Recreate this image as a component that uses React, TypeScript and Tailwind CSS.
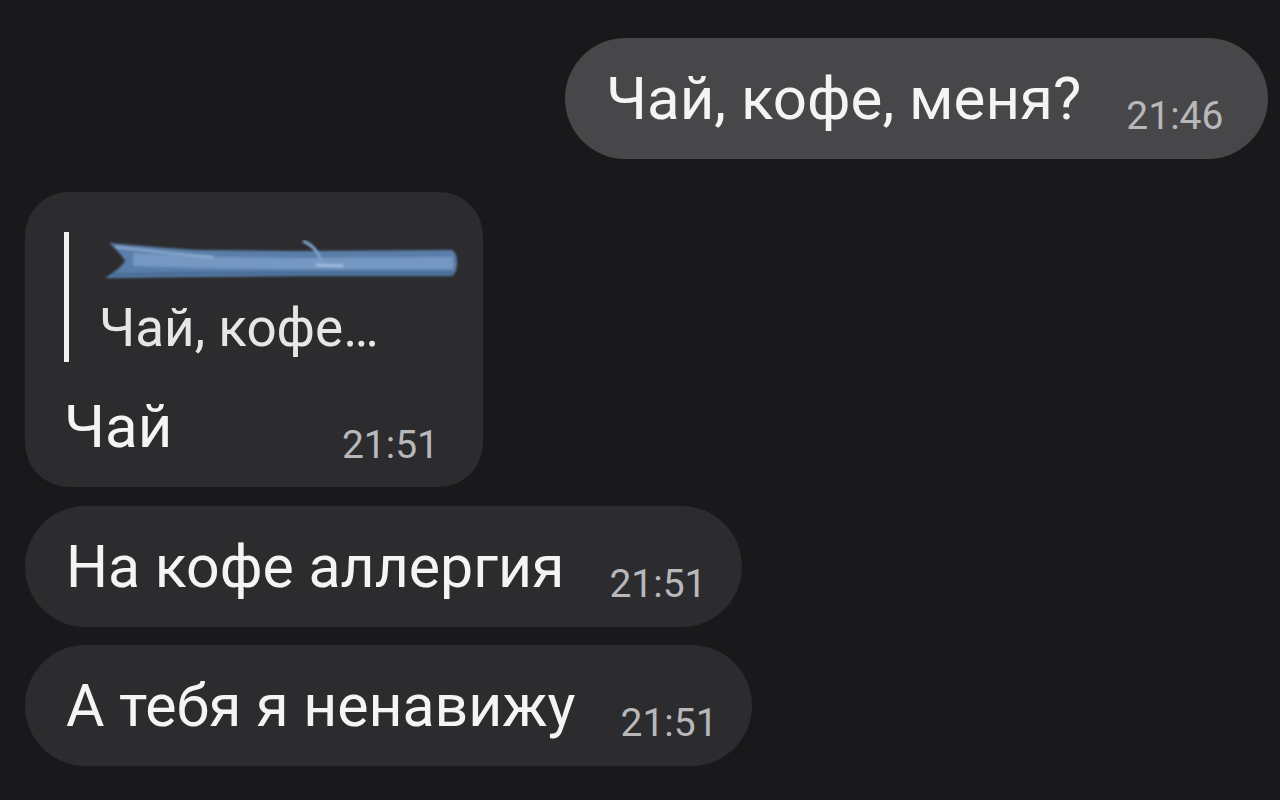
import React from "react";

function Scribble() {
  return (
    <svg width="360" height="40" viewBox="0 0 360 40" className="block">
      <defs>
        <filter id="soft" x="-5%" y="-30%" width="110%" height="160%">
          <feGaussianBlur stdDeviation="1" />
        </filter>
      </defs>
      <g filter="url(#soft)">
        <path
          d="M6 3 C30 5 60 8 95 10 L200 11 L348 10 C356 11 356 34 348 36 L200 36 L95 37 C60 37 30 38 2 38 C12 32 18 27 22 21 C18 14 12 8 6 3 Z"
          fill="#5a7ea9"
        />
        <path
          d="M30 13 C80 16 140 18 200 18 L350 17 L350 29 L200 29 C140 29 80 28 30 26 Z"
          fill="#7fa1cb"
          opacity="0.75"
        />
        <path
          d="M12 7 C40 10 70 14 110 17"
          stroke="#9bb8dc"
          strokeWidth="2.5"
          fill="none"
          opacity="0.7"
        />
        <path
          d="M10 35 C50 33 110 33 200 33 C260 33 310 33 350 33"
          stroke="#42668f"
          strokeWidth="3"
          fill="none"
          opacity="0.8"
        />
        <path
          d="M200 1 C210 5 216 12 219 23"
          stroke="#7d9fc8"
          strokeWidth="3"
          fill="none"
        />
        <path
          d="M213 25 L240 26"
          stroke="#a9c3e3"
          strokeWidth="3"
          fill="none"
          opacity="0.8"
        />
      </g>
    </svg>
  );
}

interface BubbleProps {
  text: string;
  time: string;
  outgoing?: boolean;
  className?: string;
}

function Bubble({ text, time, outgoing, className }: BubbleProps) {
  return (
    <div
      className={
        "flex h-[121px] items-center rounded-full pl-[41px] " +
        (outgoing ? "bg-[#474749] text-[60px] " : "bg-[#2c2c2f] text-[59px] ") +
        (className || "")
      }
    >
      <span className="leading-none text-[#f4f4f4]">{text}</span>
      <span className="ml-[45px] translate-y-[18px] text-[39px] leading-none text-[#b8b8ba]">
        {time}
      </span>
    </div>
  );
}

export default function App() {
  return (
    <div
      className="flex h-[800px] w-[1280px] flex-col overflow-hidden bg-[#19191b] pt-[38px]"
      style={{ fontFamily: "Roboto, 'Noto Sans', sans-serif" }}
    >
      <div className="flex justify-end pr-3">
        <Bubble text="Чай, кофе, меня?" time="21:46" outgoing className="w-[703px]" />
      </div>

      <div className="mt-[33px] ml-[25px] flex h-[295px] w-[458px] flex-col rounded-[44px] bg-[#2c2c2f] pt-[40px] pl-[39px]">
        <div className="flex h-[130px]">
          <div className="w-[5px] bg-[#f2f2f2]" />
          <div className="flex flex-col pl-[30px]">
            <div className="mt-[8px] ml-[4px]">
              <Scribble />
            </div>
            <div className="mt-[22px] text-[53px] leading-none text-[#e6e6e6]">Чай, кофе…</div>
          </div>
        </div>
        <div className="mt-[35px] flex items-center pr-[44px]">
          <span className="text-[60px] leading-none text-[#f4f4f4]">Чай</span>
          <span className="ml-auto translate-y-[18px] text-[39px] leading-none text-[#b8b8ba]">
            21:51
          </span>
        </div>
      </div>

      <div className="mt-[19px] ml-[25px] flex">
        <Bubble text="На кофе аллергия" time="21:51" className="w-[717px]" />
      </div>
      <div className="mt-[18px] ml-[25px] flex">
        <Bubble text="А тебя я ненавижу" time="21:51" className="w-[727px]" />
      </div>
    </div>
  );
}
